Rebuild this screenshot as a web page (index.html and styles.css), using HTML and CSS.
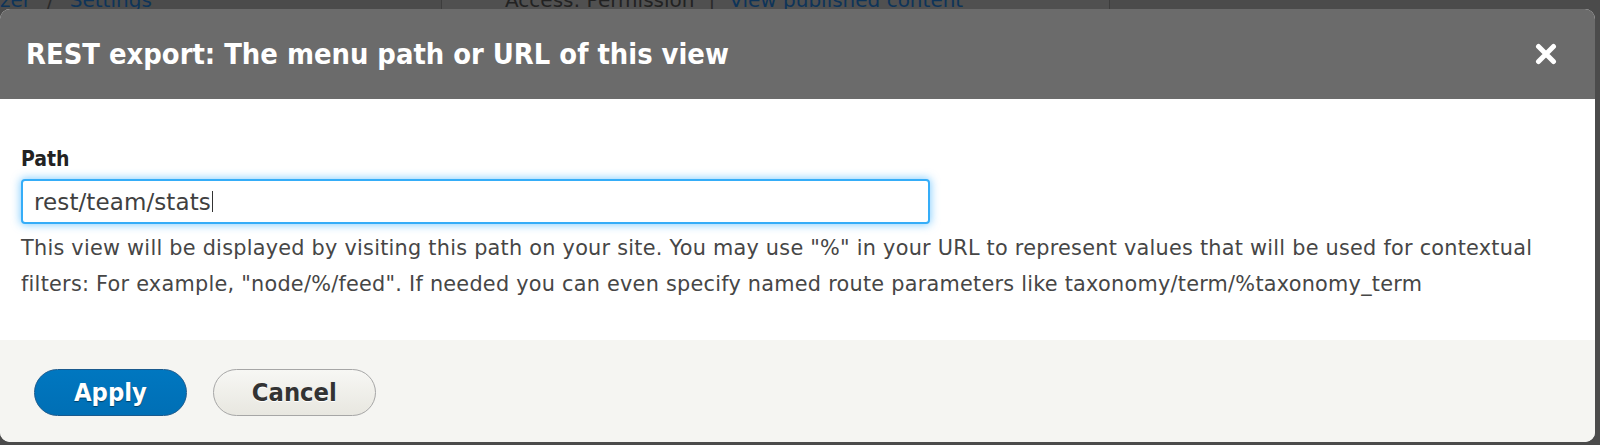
FILE: index.html
```html
<!DOCTYPE html>
<html lang="en">
<head>
<meta charset="utf-8">
<title>REST export: The menu path or URL of this view</title>
<link rel="stylesheet" href="styles.css">
</head>
<body>
<div class="page">
  <div class="behind">
    <div class="crumbs">
      <span class="link">zer</span>
      <span class="sep">/</span>
      <span class="link">Settings</span>
    </div>
    <div class="cell">
      <span class="muted">Access: Permission</span>
      <span class="sep">|</span>
      <span class="link">View published content</span>
    </div>
  </div>

  <div class="dialog" role="dialog" aria-labelledby="dlg-title">
    <div class="dialog-header">
      <h1 class="dialog-title" id="dlg-title">REST export: The menu path or URL of this view</h1>
      <button class="close" type="button" aria-label="Close">
        <svg width="22" height="22" viewBox="0 0 22 22" aria-hidden="true">
          <path d="M3.5 3.5 L18.5 18.5 M18.5 3.5 L3.5 18.5" stroke="#fff" stroke-width="5" stroke-linecap="round" fill="none"/>
        </svg>
      </button>
    </div>

    <div class="dialog-body">
      <label class="field-label" for="path">Path</label>
      <div class="text-input" id="path"><span class="value">rest/team/stats</span><span class="caret"></span></div>
      <p class="description">This view will be displayed by visiting this path on your site. You may use "%" in your URL to represent values that will be used for contextual filters: For example, "node/%/feed". If needed you can even specify named route parameters like taxonomy/term/%taxonomy_term</p>
    </div>

    <div class="dialog-footer">
      <button class="btn btn-primary" type="button">Apply</button>
      <button class="btn" type="button">Cancel</button>
    </div>
  </div>
</div>
</body>
</html>
```

FILE: styles.css
```css
* { box-sizing: border-box; }

body {
  margin: 0;
  font-family: "DejaVu Sans", sans-serif;
}

.page {
  position: relative;
  width: 1600px;
  height: 445px;
  background: #4b4b4b;
  overflow: hidden;
}

/* page content visible behind the modal overlay */
.behind {
  display: flex;
  height: 9px;
  overflow: hidden;
  font-size: 20px;
  line-height: 20px;
}

.crumbs {
  width: 441px;
  display: flex;
  gap: 16px;
  margin-top: -10px;
}

.cell {
  width: 669px;
  display: flex;
  gap: 14px;
  padding-left: 63px;
  margin-top: -10px;
  border-left: 1px solid #3d3d3d;
  border-right: 1px solid #3d3d3d;
  background: #505050;
}

.link { color: #0e3459; }
.muted { color: #222; }
.sep { color: #2a2a2a; }

/* dialog */
.dialog {
  position: absolute;
  top: 9px;
  left: 0;
  width: 1595px;
  height: 433px;
  display: flex;
  flex-direction: column;
  background: #fff;
  border-radius: 10px;
  overflow: hidden;
}

.dialog-header {
  flex: none;
  height: 90px;
  display: flex;
  align-items: center;
  justify-content: space-between;
  padding: 0 38px 0 26px;
  background: #6b6b6b;
}

.dialog-title {
  margin: 0;
  color: #fff;
  font-family: "DejaVu Sans Condensed", "DejaVu Sans", sans-serif;
  font-stretch: condensed;
  font-weight: bold;
  font-size: 28.8px;
  line-height: 1.2;
}

.close {
  width: 22px;
  height: 22px;
  padding: 0;
  border: 0;
  background: none;
  display: flex;
}

.dialog-body {
  flex: none;
  padding: 47px 22px 38px 21px;
}

.field-label {
  display: block;
  height: 26px;
  margin-bottom: 7px;
  color: #222;
  font-family: "DejaVu Sans Condensed", "DejaVu Sans", sans-serif;
  font-stretch: condensed;
  font-weight: bold;
  font-size: 21px;
  line-height: 26px;
}

.text-input {
  width: 909px;
  height: 45px;
  display: flex;
  align-items: center;
  padding: 0 11px;
  border: 2px solid #35adf8;
  border-radius: 4px;
  box-shadow: 0 0 9px 1px rgba(40, 170, 255, 0.55);
  background: #fff;
  color: #404040;
  font-size: 23px;
  letter-spacing: 0.1px;
  line-height: 26px;
}

.caret {
  width: 1px;
  height: 21px;
  margin-left: 1px;
  background: #333;
}

.description {
  margin: 6px 0 0;
  color: #464646;
  font-size: 20.8px;
  letter-spacing: 0.25px;
  line-height: 36px;
}

.dialog-footer {
  flex: 1;
  display: flex;
  align-items: flex-start;
  gap: 26px;
  padding: 29px 34px;
  background: #f5f5f2;
}

.btn {
  height: 47px;
  padding: 0 39px;
  border: 1px solid #a6a6a6;
  border-radius: 24px;
  background: linear-gradient(#f7f7f4, #e8e7e0);
  color: #333;
  font-family: "DejaVu Sans Condensed", "DejaVu Sans", sans-serif;
  font-stretch: condensed;
  font-weight: bold;
  font-size: 25.3px;
  line-height: 45px;
  text-shadow: 0 1px 0 #fff;
}

.btn + .btn {
  padding: 0 38px;
}

.btn-primary {
  background: linear-gradient(#0077c0, #006fb5);
  border-color: #1a5a8e;
  color: #fff;
  text-shadow: 0 1px 1px rgba(0, 0, 0, 0.45);
}
```
